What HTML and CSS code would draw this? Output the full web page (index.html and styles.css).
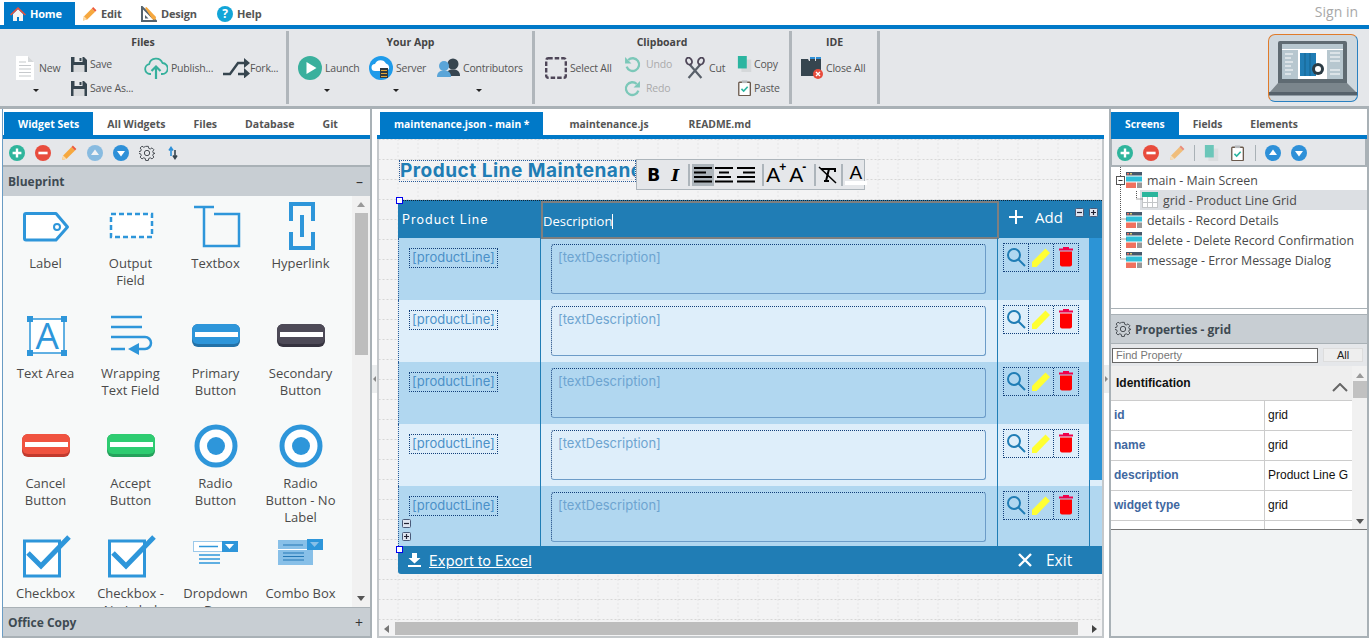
FILE: index.html
```html
<!DOCTYPE html>
<html lang="en">
<head>
<meta charset="utf-8">
<title>Product Line Maintenance</title>
<link rel="stylesheet" href="styles.css">
</head>
<body>
<svg class="sprites" width="0" height="0">
  <symbol id="pencil" viewBox="0 0 16 16"><path d="M1 15l1.2-4.6L10.5 2 14 5.5 5.6 13.8z" fill="#f6a83f"/><path d="M10.5 2l1.4-1.4 3.5 3.5L14 5.5z" fill="#ee5a3c"/><path d="M1 15l1.2-4.6 3.4 3.4z" fill="#fbd9a5"/></symbol>
  <symbol id="cplus" viewBox="0 0 16 16"><circle cx="8" cy="8" r="8" fill="#2fb59c"/><path d="M8 3.6v8.8M3.6 8h8.8" stroke="#fff" stroke-width="2.4"/></symbol>
  <symbol id="cminus" viewBox="0 0 16 16"><circle cx="8" cy="8" r="8" fill="#e84c3d"/><path d="M3.4 8h9.2" stroke="#fff" stroke-width="2.6"/></symbol>
  <symbol id="cup" viewBox="0 0 16 16"><circle cx="8" cy="8" r="8" fill="#2e90d8"/><path d="M8 4.6l4 5.4H4z" fill="#fff"/></symbol>
  <symbol id="cdown" viewBox="0 0 16 16"><circle cx="8" cy="8" r="8" fill="#2e90d8"/><path d="M8 11.4l4-5.4H4z" fill="#fff"/></symbol>
  <symbol id="gear" viewBox="0 0 24 24"><path d="M10 2h4l.6 3 2.3 1 2.6-1.700 2.800 2.800-1.700 2.600 1 2.300 3 .6v0l-.6 0-2.400.6-1 2.300 1.700 2.600-2.800 2.800-2.600-1.700-2.300 1-.6 3h-4l-.6-3-2.300-1-2.600 1.700-2.800-2.800 1.700-2.600-1-2.300-3-.6v-2.600l3-.6 1-2.300-1.700-2.600 2.800-2.800 2.600 1.700 2.300-1z" fill="none" stroke="#4a4f55" stroke-width="1.500" stroke-linejoin="round"/><circle cx="12" cy="12" r="4" fill="none" stroke="#4a4f55" stroke-width="1.500"/></symbol>
  <symbol id="floppy" viewBox="0 0 16 16"><path d="M0 1h13l3 3v12H0z" fill="#36454f"/><rect x="3.500" y="1" width="8" height="5" fill="#e6e8ea"/><rect x="8.500" y="2" width="2" height="3" fill="#36454f"/><rect x="2.500" y="9" width="11" height="7" fill="#d8dadc"/></symbol>
  <symbol id="copy" viewBox="0 0 18 18"><rect x="5" y="4" width="11" height="14" fill="#d5d8da"/><rect x="1" y="0" width="10" height="14" fill="#2bb5a0"/></symbol>
  <symbol id="paste" viewBox="0 0 16 18"><rect x="1" y="2.500" width="13" height="15" rx="1" fill="#fff" stroke="#6b5a4d" stroke-width="1.500"/><rect x="4.500" y="0.500" width="6" height="3" fill="#b7babd"/><path d="M4 10l2.500 2.500L11 7.500" fill="none" stroke="#2bb5a0" stroke-width="1.800"/></symbol>
  <symbol id="sm-minus" viewBox="0 0 9 9"><rect x=".5" y=".5" width="8" height="8" rx="1" fill="#dfe5f0" stroke="#4a5a78"/><path d="M2 4.500h5" stroke="#223" stroke-width="1.200"/></symbol>
  <symbol id="sm-plus" viewBox="0 0 9 9"><rect x=".5" y=".5" width="8" height="8" rx="1" fill="#dfe5f0" stroke="#4a5a78"/><path d="M2 4.500h5M4.500 2v5" stroke="#223" stroke-width="1.200"/></symbol>
  <symbol id="mag" viewBox="0 0 20 20"><circle cx="8" cy="8" r="6" fill="none" stroke="#207db5" stroke-width="2"/><path d="M12.500 12.500L19 19" stroke="#207db5" stroke-width="2"/></symbol>
  <symbol id="ypen" viewBox="0 0 20 20"><path d="M1 20v-5L14.500 1.500 19 6 5.500 20z" fill="#ffff33"/></symbol>
  <symbol id="trash" viewBox="0 0 16 20"><rect x="1" y="1.500" width="14" height="2" fill="#f0004a"/><rect x="5" y="0" width="6" height="2" fill="#f0004a"/><path d="M2 4.500h12v13a2 2 0 0 1-2 2H4a2 2 0 0 1-2-2z" fill="#ff0000"/></symbol>
  <symbol id="screen" viewBox="0 0 16 16"><rect x="0" y="0" width="16" height="3.500" fill="#46586a"/><rect x="0" y="4.500" width="16" height="5" fill="#30c0d8"/><rect x="0" y="10.500" width="10" height="5.500" fill="#f0725f"/><rect x="11" y="10.500" width="5" height="5.500" fill="#999"/><rect x="1" y="1" width="2" height="1.500" fill="#f0725f"/><rect x="4" y="1" width="2" height="1.500" fill="#d9c26a"/></symbol>
  <symbol id="radio" viewBox="0 0 60 48"><circle cx="30" cy="24" r="19" fill="#fff" stroke="#2e96da" stroke-width="5"/><circle cx="30" cy="24" r="9" fill="#2e96da"/></symbol>
  <symbol id="check" viewBox="0 0 60 48"><rect x="8.500" y="9" width="35" height="35" fill="#fff" stroke="#2e96da" stroke-width="3"/><path d="M12 21l13 13L53 5" fill="none" stroke="#2e96da" stroke-width="5"/></symbol>
</svg>

<header class="topbar">
  <div class="toptab active">
    <svg class="ti" viewBox="0 0 16 16"><path d="M3 8v7h4v-4h2v4h4V8L8 3z" fill="#f4f4f4"/><path d="M0 8.500L8 1l8 7.500-1.200 1L8 3.300 1.200 9.500z" fill="#e8503d"/></svg>
    <span>Home</span>
  </div>
  <div class="toptab tab-edit"><svg class="ti" viewBox="0 0 16 16"><use href="#pencil"/></svg><span>Edit</span></div>
  <div class="toptab tab-design">
    <svg class="ti" viewBox="0 0 16 16"><path d="M1 1v14h14z" fill="none" stroke="#55636e" stroke-width="2"/><path d="M4 9v3.500h3.500z" fill="#55636e"/><path d="M4 2l1.500-1L15 11l-.6 3-3-.8z" fill="#f6a83f"/></svg>
    <span>Design</span>
  </div>
  <div class="toptab tab-help"><span class="help-ic">?</span><span>Help</span></div>
  <a class="signin">Sign in</a>
</header>

<section class="ribbon">
  <div class="rgroup g-files">
    <h3>Files</h3>
    <div class="rrow">
      <div class="big g-new">
        <div class="bigtop"><svg class="i18" viewBox="0 0 18 24"><path d="M0 0h12l6 6v18H0z" fill="#fff"/><path d="M12 0l6 6h-6z" fill="#d5d8da"/><path d="M3 6h7M3 9.500h12M3 13h12M3 16.500h12M3 20h12" stroke="#c6c9cc" stroke-width="1.200"/></svg><span>New</span></div>
        <i class="caret"></i>
      </div>
      <div class="stack g-save">
        <div class="sit"><svg class="i16" viewBox="0 0 16 16"><use href="#floppy"/></svg><span>Save</span></div>
        <div class="sit"><svg class="i16" viewBox="0 0 16 16"><use href="#floppy"/></svg><span>Save As...</span></div>
      </div>
      <div class="big g-pub">
        <div class="bigtop"><svg class="i24" viewBox="0 0 24 24"><path d="M7 18H6a5 5 0 0 1-.8-9.900A7 7 0 0 1 18.500 7 5.500 5.500 0 0 1 18 18h-1" fill="none" stroke="#35b09c" stroke-width="1.800"/><path d="M12 23V11M7.500 15L12 10.500 16.500 15" fill="none" stroke="#35b09c" stroke-width="2.200"/></svg><span>Publish...</span></div>
      </div>
      <div class="big g-fork">
        <div class="bigtop"><svg class="i27" viewBox="0 0 27 20"><path d="M0 16h7L15 5h8M15 16h8" fill="none" stroke="#36454f" stroke-width="2.400"/><path d="M21 0l6 5-6 5zM21 10l6 5.500-6 5z" fill="#36454f"/></svg><span>Fork...</span></div>
      </div>
    </div>
  </div>
  <div class="rgroup g-app">
    <h3>Your App</h3>
    <div class="rrow">
      <div class="big g-launch">
        <div class="bigtop"><svg class="i24" viewBox="0 0 24 24"><circle cx="12" cy="12" r="12" fill="#3ab09d"/><path d="M8.500 6l10 6-10 6z" fill="#fff"/></svg><span>Launch</span></div>
        <i class="caret"></i>
      </div>
      <div class="big g-server">
        <div class="bigtop"><svg class="i24" viewBox="0 0 24 24"><circle cx="12" cy="12" r="12" fill="#1e9bea"/><path d="M6 15a3.500 3.500 0 0 1 0-7 6 6 0 0 1 11-.5 4 4 0 0 1 1 7.500z" fill="#fff"/><rect x="11" y="12" width="8" height="10" fill="#2f3a40"/><path d="M12 14.500h6M12 17.500h6M12 20.500h6" stroke="#e0a63a" stroke-width="1.200"/></svg><span>Server</span></div>
        <i class="caret"></i>
      </div>
      <div class="big g-contrib">
        <div class="bigtop"><svg class="i24" viewBox="0 0 24 24"><circle cx="17" cy="8" r="5.500" fill="#36454f"/><path d="M10 20c0-5 3-6.500 7-6.500s7 1.500 7 6.500z" fill="#36454f"/><circle cx="8" cy="10" r="5" fill="#5aa5d8"/><path d="M1 21c0-5 3-6.500 7-6.500s7 1.500 7 6.500z" fill="#5aa5d8"/></svg><span>Contributors</span></div>
        <i class="caret"></i>
      </div>
    </div>
  </div>
  <div class="rgroup g-clip">
    <h3>Clipboard</h3>
    <div class="rrow">
      <div class="big g-sel">
        <div class="bigtop"><svg class="i22" viewBox="0 0 22 22"><rect x="1.200" y="1.200" width="19.600" height="19.600" rx="2" fill="none" stroke="#4e4658" stroke-width="2.400" stroke-dasharray="4.500 2"/></svg><span>Select All</span></div>
      </div>
      <div class="stack g-undo">
        <div class="sit dim"><svg class="i17" viewBox="0 0 16 16"><path d="M4 3.800A6 6 0 1 1 2.500 10" fill="none" stroke="#7cc8b9" stroke-width="2.200"/><path d="M1 1v6h6z" fill="#7cc8b9"/></svg><span>Undo</span></div>
        <div class="sit dim"><svg class="i17" viewBox="0 0 16 16"><path d="M12 3.800A6 6 0 1 0 13.500 10" fill="none" stroke="#7cc8b9" stroke-width="2.200"/><path d="M15 1v6H9z" fill="#7cc8b9"/></svg><span>Redo</span></div>
      </div>
      <div class="big g-cut">
        <div class="bigtop"><svg class="i22" viewBox="0 0 22 24"><path d="M5 8l13 15M17 8L4 23" stroke="#59606a" stroke-width="2.400"/><ellipse cx="4.500" cy="4.500" rx="3" ry="4" fill="none" stroke="#4e4658" stroke-width="2" transform="rotate(-25 4.500 4.500)"/><ellipse cx="17.500" cy="4.500" rx="3" ry="4" fill="none" stroke="#4e4658" stroke-width="2" transform="rotate(25 17.500 4.500)"/></svg><span>Cut</span></div>
      </div>
      <div class="stack g-copy">
        <div class="sit"><svg class="i16" viewBox="0 0 18 18"><use href="#copy"/></svg><span>Copy</span></div>
        <div class="sit"><svg class="i16" viewBox="0 0 16 18"><use href="#paste"/></svg><span>Paste</span></div>
      </div>
    </div>
  </div>
  <div class="rgroup g-ide">
    <h3>IDE</h3>
    <div class="rrow">
      <div class="big g-close">
        <div class="bigtop"><svg class="i24" viewBox="0 0 24 24"><path d="M1 3h7l1 2h1V3h5v2h1V3h5v17H1z" fill="#36454f"/><path d="M10 2h5M16 2h5" stroke="#2e90d8" stroke-width="2"/><circle cx="18" cy="18" r="5" fill="#e84c3d"/><path d="M16 16l4 4M20 16l-4 4" stroke="#fff" stroke-width="1.400"/></svg><span>Close All</span></div>
      </div>
    </div>
  </div>
  <div class="thumb">
    <svg viewBox="1 1 88 66" width="88" height="66">
      <path d="M10 9a2 2 0 0 1 2-2h65a2 2 0 0 1 2 2v40H10z" fill="#5f6b72"/>
      <rect x="14" y="10" width="61" height="35" fill="#b7c7cf"/>
      <rect x="14" y="15" width="61" height="1" fill="#fff"/>
      <rect x="30" y="16" width="29" height="29" fill="#fff"/>
      <rect x="32" y="19" width="16" height="23" fill="#207db5"/>
      <path d="M37 19v23M42 19v23" stroke="#15648f" stroke-width="1"/>
      <circle cx="50" cy="35" r="6" fill="#2b3b44"/>
      <circle cx="50" cy="35" r="3" fill="#fff"/>
      <path d="M17 20h8M17 24h6M17 28h8M17 32h6M17 36h8M17 40h6M62 19h10M62 23h10M62 27h10M62 36h10M62 40h10" stroke="#fff" stroke-width="1"/>
      <path d="M10 49h69l10 10H1z" fill="#7b868c"/>
      <rect x="1" y="58" width="88" height="3.500" fill="#55616a"/>
    </svg>
  </div>
</section>

<main class="workspace">
  <aside class="panel left">
    <nav class="tabs">
      <span class="tab active">Widget Sets</span><span class="tab">All Widgets</span><span class="tab">Files</span><span class="tab">Database</span><span class="tab">Git</span>
    </nav>
    <div class="tools">
      <svg class="t16"><use href="#cplus"/></svg>
      <svg class="t16"><use href="#cminus"/></svg>
      <svg class="t16"><use href="#pencil"/></svg>
      <svg class="t16 faded"><use href="#cup"/></svg>
      <svg class="t16"><use href="#cdown"/></svg>
      <svg class="t16" viewBox="0 0 24 24"><use href="#gear"/></svg>
      <svg class="t16" viewBox="0 0 16 16"><path d="M6 3v8M4 5.500L6 2.500 8 5.500" fill="none" stroke="#2e90d8" stroke-width="1.600"/><path d="M10 5v8M8 10.500l2 3 2-3" fill="none" stroke="#36454f" stroke-width="1.600"/></svg>
    </div>
    <div class="acc"><b>Blueprint</b><span>–</span></div>
    <div class="widgets">
      <div class="wgrid">
        <div class="w"><svg viewBox="0 0 60 48"><path d="M10 11.500h30L51.500 25 40 38H10q-1.500 0-1.500-1.500V13q0-1.500 1.500-1.500z" fill="#fff" stroke="#2e96da" stroke-width="3" stroke-linejoin="round"/><circle cx="41" cy="25" r="3" fill="none" stroke="#2e96da" stroke-width="2"/></svg><p>Label</p></div>
        <div class="w"><svg viewBox="0 0 60 48"><rect x="10" y="12" width="41" height="23" fill="#fff" stroke="#2e96da" stroke-width="2.500" stroke-dasharray="5 3"/></svg><p>Output Field</p></div>
        <div class="w"><svg viewBox="0 0 60 48"><path d="M8 5h20M18 5v39h35V12H28" fill="none" stroke="#2e96da" stroke-width="2.500"/></svg><p>Textbox</p></div>
        <div class="w"><svg viewBox="0 0 60 48"><path d="M20 19V2h22v17M20 30v16h22V30M31 13v22" fill="none" stroke="#2e96da" stroke-width="4"/></svg><p>Hyperlink</p></div>
        <div class="w"><svg viewBox="0 0 60 48"><rect x="14" y="7" width="34" height="34" fill="#fff" stroke="#2e96da" stroke-width="1.500"/><path d="M11 4h6v6h-6zM45 4h6v6h-6zM11 38h6v6h-6zM45 38h6v6h-6z" fill="#2e96da"/><text x="31" y="37" class="bigA">A</text></svg><p>Text Area</p></div>
        <div class="w"><svg viewBox="0 0 60 48"><path d="M10 5h31M10 15h31M10 25h34a6 6 0 0 1 0 12H34M10 37h14" fill="none" stroke="#2e96da" stroke-width="2.500"/><path d="M27 37l11-6v12z" fill="#2e96da"/></svg><p>Wrapping Text Field</p></div>
        <div class="w"><svg viewBox="0 0 60 48"><rect x="6" y="12" width="48" height="23" rx="6" fill="#2372a8"/><rect x="6" y="12" width="48" height="20" rx="6" fill="#2e96da"/><rect x="9" y="20" width="43" height="5" fill="#fff"/></svg><p>Primary Button</p></div>
        <div class="w"><svg viewBox="0 0 60 48"><rect x="6" y="12" width="48" height="23" rx="6" fill="#35333f"/><rect x="6" y="12" width="48" height="20" rx="6" fill="#4d4a57"/><rect x="9" y="20" width="43" height="5" fill="#fff"/></svg><p>Secondary Button</p></div>
        <div class="w"><svg viewBox="0 0 60 48"><rect x="6" y="12" width="48" height="23" rx="6" fill="#c23a2e"/><rect x="6" y="12" width="48" height="20" rx="6" fill="#f05340"/><rect x="9" y="20" width="43" height="5" fill="#fff"/></svg><p>Cancel Button</p></div>
        <div class="w"><svg viewBox="0 0 60 48"><rect x="6" y="12" width="48" height="23" rx="6" fill="#25a25c"/><rect x="6" y="12" width="48" height="20" rx="6" fill="#2ecc71"/><rect x="9" y="20" width="43" height="5" fill="#fff"/></svg><p>Accept Button</p></div>
        <div class="w"><svg viewBox="0 0 60 48"><use href="#radio"/></svg><p>Radio Button</p></div>
        <div class="w"><svg viewBox="0 0 60 48"><use href="#radio"/></svg><p>Radio Button - No Label</p></div>
        <div class="w"><svg viewBox="0 0 60 48"><use href="#check"/></svg><p>Checkbox</p></div>
        <div class="w"><svg viewBox="0 0 60 48"><use href="#check"/></svg><p>Checkbox - No Label</p></div>
        <div class="w"><svg viewBox="0 0 60 48"><rect x="7.500" y="9.500" width="36" height="10" fill="#fff" stroke="#9cc9ea"/><path d="M13 14.500h19M13 23h21M13 27h21M13 31h21" stroke="#2e96da" stroke-width="1.400"/><rect x="36" y="9" width="16" height="11" fill="#2e96da"/><path d="M39 12h9l-4.500 5z" fill="#fff"/></svg><p>Dropdown Box</p></div>
        <div class="w"><svg viewBox="0 0 60 48"><rect x="7" y="8" width="35" height="25" fill="#88c0e8"/><path d="M12 13h20M12 21h21M12 24.500h21M12 28h21" stroke="#2478b5" stroke-width="1.200"/><rect x="7" y="17" width="35" height="1" fill="#fff"/><rect x="36" y="7" width="16" height="11" fill="#2e96da"/><path d="M39 10h9l-4.500 5z" fill="#88c0e8"/></svg><p>Combo Box</p></div>
      </div>
      <div class="vscroll">
        <i class="arr up"></i><i class="vthumb"></i><i class="arr down"></i>
      </div>
    </div>
    <div class="acc bottom"><b>Office Copy</b><span>+</span></div>
  </aside>

  <div class="split"><i class="grip l"></i></div>

  <section class="panel center">
    <nav class="tabs">
      <span class="tab active">maintenance.json - main *</span><span class="tab wide first-wide">maintenance.js</span><span class="tab wide">README.md</span>
    </nav>
    <div class="canvas-wrap">
      <div class="canvas">
        <svg class="dots" width="100%" height="100%"><defs><pattern id="dotgrid" x="-0.500" y="0" width="20" height="20" patternUnits="userSpaceOnUse"><path d="M20 0V20M0 .5H20" stroke="#d6d6d6" stroke-width="1" stroke-dasharray="2 2"/></pattern></defs><rect width="100%" height="100%" fill="url(#dotgrid)"/></svg>
        <div class="title"><span>Product Line Maintenance</span></div>
        <div class="fmt">
          <span class="fb bold">B</span>
          <span class="fb ital">I</span>
          <i class="fsep"></i>
          <span class="fb sel"><svg class="al" viewBox="0 0 18 18"><path d="M0 2h18M0 6.500h12M0 11h18M0 15.500h18" stroke="#000" stroke-width="2"/></svg></span>
          <span class="fb"><svg class="al" viewBox="0 0 18 18"><path d="M0 2h18M4 6.500h10M2 11h14M0 15.500h18" stroke="#000" stroke-width="2"/></svg></span>
          <span class="fb"><svg class="al" viewBox="0 0 18 18"><path d="M0 2h18M6 6.500h12M0 11h18M0 15.500h18" stroke="#000" stroke-width="2"/></svg></span>
          <i class="fsep far"></i>
          <span class="fb fa">A<sup>+</sup></span>
          <span class="fb fa">A<sup>-</sup></span>
          <i class="fsep far"></i>
          <span class="fb"><svg class="al wide" viewBox="0 0 20 18"><path d="M3 3h14v3M11 3L8 15M6 15h5" fill="none" stroke="#000" stroke-width="2"/><path d="M1 1l17 16" stroke="#000" stroke-width="1.500"/></svg></span>
          <i class="fsep"></i>
          <span class="fb fc">A</span>
        </div>
        <i class="handle h1"></i>
        <div class="gridw">
          <div class="ghead">
            <div class="gh1">Product Line</div>
            <div class="gh2">Description<i class="cursor"></i></div>
            <div class="gh3">
              <svg class="g16" viewBox="0 0 16 16"><path d="M8 1v14M1 8h14" stroke="#fff" stroke-width="2"/></svg>
              <span class="add">Add</span>
              <svg class="g9 first"><use href="#sm-minus"/></svg>
              <svg class="g9 second"><use href="#sm-plus"/></svg>
            </div>
          </div>
          <div class="grow odd">
            <div class="c1"><span class="pl">[productLine]</span></div>
            <div class="c2"><div class="td">[textDescription]</div></div>
            <div class="c3"><div class="acts"><span><svg class="a1"><use href="#mag"/></svg></span><span><svg class="a1"><use href="#ypen"/></svg></span><span><svg class="a1"><use href="#trash"/></svg></span></div></div>
          </div>
          <div class="grow even">
            <div class="c1"><span class="pl">[productLine]</span></div>
            <div class="c2"><div class="td">[textDescription]</div></div>
            <div class="c3"><div class="acts"><span><svg class="a1"><use href="#mag"/></svg></span><span><svg class="a1"><use href="#ypen"/></svg></span><span><svg class="a1"><use href="#trash"/></svg></span></div></div>
          </div>
          <div class="grow odd">
            <div class="c1"><span class="pl">[productLine]</span></div>
            <div class="c2"><div class="td">[textDescription]</div></div>
            <div class="c3"><div class="acts"><span><svg class="a1"><use href="#mag"/></svg></span><span><svg class="a1"><use href="#ypen"/></svg></span><span><svg class="a1"><use href="#trash"/></svg></span></div></div>
          </div>
          <div class="grow even">
            <div class="c1"><span class="pl">[productLine]</span></div>
            <div class="c2"><div class="td">[textDescription]</div></div>
            <div class="c3"><div class="acts"><span><svg class="a1"><use href="#mag"/></svg></span><span><svg class="a1"><use href="#ypen"/></svg></span><span><svg class="a1"><use href="#trash"/></svg></span></div></div>
          </div>
          <div class="grow odd last">
            <div class="c1"><span class="pl">[productLine]</span></div>
            <div class="c2"><div class="td">[textDescription]</div></div>
            <div class="c3"><div class="acts"><span><svg class="a1"><use href="#mag"/></svg></span><span><svg class="a1"><use href="#ypen"/></svg></span><span><svg class="a1"><use href="#trash"/></svg></span></div></div>
          </div>
          <i class="gthumb"></i>
          <svg class="g9 gm"><use href="#sm-minus"/></svg>
          <svg class="g9 gp"><use href="#sm-plus"/></svg>
          <div class="gfoot">
            <svg class="g13" viewBox="0 0 13 14"><path d="M4 0h5v5h3.500L6.500 10.500.5 5H4z" fill="#fff"/><rect x="0" y="12" width="13" height="2" fill="#fff"/></svg>
            <a class="exp">Export to Excel</a>
            <svg class="g16 xi" viewBox="0 0 16 16"><path d="M2 2l12 12M14 2L2 14" stroke="#fff" stroke-width="2.400"/></svg>
            <span class="exit">Exit</span>
          </div>
        </div>
        <i class="handle h2"></i>
      </div>
      <div class="hscroll"><i class="arr left"></i><i class="hthumb"></i><i class="arr right"></i></div>
    </div>
  </section>

  <div class="split"><i class="grip r"></i></div>

  <aside class="panel right">
    <nav class="tabs">
      <span class="tab active">Screens</span><span class="tab">Fields</span><span class="tab">Elements</span>
    </nav>
    <div class="tools rtools">
      <svg class="t16"><use href="#cplus"/></svg>
      <svg class="t16"><use href="#cminus"/></svg>
      <svg class="t16 faded2"><use href="#pencil"/></svg>
      <i class="tsep"></i>
      <svg class="t16 faded2" viewBox="0 0 18 18"><use href="#copy"/></svg>
      <svg class="t16" viewBox="0 0 16 18"><use href="#paste"/></svg>
      <i class="tsep"></i>
      <svg class="t16"><use href="#cup"/></svg>
      <svg class="t16"><use href="#cdown"/></svg>
    </div>
    <div class="tree">
      <svg class="treelines" width="60" height="110"><path d="M9.500 0V92M9.500 52H16M9.500 72H16M9.500 92H16M25.500 24V32H32" fill="none" stroke="#555" stroke-dasharray="1 1"/><rect x="5.500" y="9.500" width="8" height="8" fill="#fff" stroke="#555"/><path d="M7.500 13.500h4" stroke="#333"/></svg>
      <div class="node n0"><svg class="s16"><use href="#screen"/></svg><span>main - Main Screen</span></div>
      <div class="node n1 selected"><svg class="s16" viewBox="0 0 16 16"><rect x=".5" y=".5" width="15" height="15" fill="#fff" stroke="#c3c6c8"/><rect width="16" height="5" fill="#2bb59c"/><path d="M5.500 5v11M10.500 5v11M0 10.500h16" stroke="#c3c6c8"/></svg><span>grid - Product Line Grid</span></div>
      <div class="node n0"><svg class="s16"><use href="#screen"/></svg><span>details - Record Details</span></div>
      <div class="node n0"><svg class="s16"><use href="#screen"/></svg><span>delete - Delete Record Confirmation</span></div>
      <div class="node n0"><svg class="s16"><use href="#screen"/></svg><span>message - Error Message Dialog</span></div>
    </div>
    <div class="props">
      <div class="phead"><svg class="s16" viewBox="0 0 24 24"><use href="#gear"/></svg><b>Properties - grid</b></div>
      <div class="psearch"><span class="pinput">Find Property</span><span class="pall">All</span></div>
      <div class="pbody">
        <div class="ptable">
          <div class="pcat"><b>Identification</b><svg class="chev" viewBox="0 0 16 9"><path d="M1 8l7-7 7 7" fill="none" stroke="#666" stroke-width="2"/></svg></div>
          <div class="prow"><span>id</span><em>grid</em></div>
          <div class="prow"><span>name</span><em>grid</em></div>
          <div class="prow"><span>description</span><em>Product Line Grid</em></div>
          <div class="prow"><span>widget type</span><em>grid</em></div>
          <div class="prow stub"><span></span><em></em></div>
        </div>
        <div class="pscroll"><i class="arr up"></i><i class="pthumb"></i><i class="arr down"></i></div>
      </div>
    </div>
  </aside>
</main>
</body>
</html>
```

FILE: styles.css
```css
* { box-sizing: border-box; }
html, body { margin: 0; padding: 0; }
body {
  width: 1369px; height: 641px; overflow: hidden; background: #fff;
  font-family: "Open Sans", "Noto Sans", sans-serif; color: #444;
  font-size: 10.5px; letter-spacing: -.2px;
}
.sprites { position: absolute; }

/* top bar */
.topbar { height: 29px; display: flex; align-items: flex-end; border-bottom: 4px solid #0079c8; padding-left: 4px; position: relative; }
.toptab { display: flex; align-items: center; height: 23px; font-weight: 700; font-size: 11px; color: #555; }
.toptab.active { width: 71px; background: #0079c8; color: #fff; padding-left: 6px; }
.tab-edit { margin-left: 7px; width: 59px; }
.tab-design { width: 76px; }
.tab-help { width: 60px; }
.ti { width: 16px; height: 16px; margin-right: 4px; flex: none; }
.tab-edit .ti { width: 15px; margin-right: 4px; }
.help-ic { width: 16px; height: 16px; border-radius: 50%; background: #12a5d8; color: #fff; font-size: 12px; line-height: 16px; text-align: center; margin-right: 4px; }
.signin { margin-left: auto; margin-right: 11px; align-self: center; font-size: 14px; letter-spacing: 0; color: #a8a8a8; position: relative; top: -1px; }

/* ribbon */
.ribbon { height: 80px; background: #e5e7ea; border-bottom: 3px solid #a9b1b6; display: flex; padding: 2px 0; position: relative; }
.rgroup { height: 73px; border-right: 3px solid #b0b6bb; }
.rgroup h3 { margin: 0; padding-top: 4px; height: 21px; font-size: 10.5px; letter-spacing: 0; line-height: 14px; text-align: center; font-weight: 700; color: #444; }
.rrow { display: flex; }
.g-files { width: 289px; } .g-files .rrow { padding-left: 16px; }
.g-app { width: 246px; } .g-app .rrow { padding-left: 9px; }
.g-clip { width: 257px; } .g-clip .rrow { padding-left: 10px; }
.g-ide { width: 88px; } .g-ide .rrow { padding-left: 8px; }
.big { display: flex; flex-direction: column; }
.bigtop { display: flex; align-items: center; height: 32px; white-space: nowrap; color: #555; }
.bigtop svg { flex: none; margin-right: 3px; }
.caret { display: block; width: 0; height: 0; border: 3px solid transparent; border-top: 3px solid #222; border-bottom: 0; margin-top: 5px; }
.stack { display: flex; flex-direction: column; }
.sit { display: flex; align-items: center; height: 24px; white-space: nowrap; color: #555; }
.sit svg { flex: none; margin-right: 3px; }
.sit.dim { color: #aaa; }
.sit.dim svg { margin: 0 5px 0 -1px; }
.g-copy .sit svg { margin-right: 1px; }
.i16 { width: 16px; height: 16px; }
.i17 { width: 17px; height: 17px; }
.i18 { width: 18px; height: 24px; }
.i22 { width: 22px; height: 22px; }
.i24 { width: 24px; height: 24px; }
.i27 { width: 27px; height: 20px; }
.g-new { width: 55px; } .g-new .bigtop svg { margin-right: 5px; } .g-new .caret { margin-left: 17px; }
.g-save { width: 73px; }
.g-pub { width: 79px; }
.g-fork .bigtop svg { margin-right: 0; }
.g-launch { width: 71px; } .g-launch .caret { margin-left: 26px; }
.g-server { width: 67px; } .g-server .caret { margin-left: 24px; }
.g-contrib .caret { margin-left: 40px; }
.g-sel { width: 80px; }
.g-undo { width: 59px; }
.g-cut { width: 53px; }
.g-close .bigtop svg { margin-right: 2px; }
.thumb { position: absolute; left: 1268px; top: 5px; width: 90px; height: 68px; border-radius: 7px; background: #cfd8de; border: 1px solid #e07b2a; border-right-color: #2a80c0; border-bottom-color: #2a80c0; }
.thumb svg { display: block; }

/* workspace */
.workspace { display: flex; height: 532px; padding-left: 2px; }
.panel { height: 529px; display: flex; flex-direction: column; background: #fff; }
.left { width: 370px; border-bottom: 2px solid #a9b1b6; border-right: 2px solid #a9b1b6; border-left: 1px solid #6a9cc4; }
.center { width: 727px; }
.right { width: 260px; border-right: 2px solid #a9b1b6; border-left: 2px solid #a9b1b6; border-bottom: 2px solid #a9b1b6; }
.split { width: 5px; position: relative; background: #fff; }
.grip { position: absolute; top: 256px; left: 0; width: 5px; height: 28px; background: #eceeef; }
.grip::after { content: ""; position: absolute; left: 1px; top: 11px; border: 3px solid transparent; border-left: 0; border-right: 3px solid #888; }
.grip.r::after { border-right: 0; border-left: 3px solid #888; }
.tabs { height: 30px; padding: 3px 0 0 1px; display: flex; border-bottom: 4px solid #0079c8; flex: none; font-weight: 700; font-size: 10.5px; letter-spacing: 0; color: #555; }
.tab { padding: 1px 14px 0; line-height: 22px; white-space: nowrap; }
.tab.active { background: #0079c8; color: #fff; }
.center .tabs { padding-left: 3px; font-size: 10.3px; }
.right .tabs { padding-left: 0; font-size: 10.3px; }
.tab.wide { padding: 1px 20px 0; }
.first-wide { margin-left: 6px; }
.tools { height: 28px; flex: none; background: #e5e7ea; border-bottom: 2px solid #a9b1b6; display: flex; align-items: center; gap: 10px; padding: 2px 0 0 6px; }
.t16 { width: 16px; height: 16px; flex: none; }
.faded { opacity: .5; }
.faded2 { opacity: .65; }
.acc { height: 29px; flex: none; background: #c8ced3; display: flex; align-items: center; justify-content: space-between; padding: 0 7px 0 5px; font-size: 12px; letter-spacing: 0; color: #3e4a52; }
.acc span { font-size: 14px; color: #333; }
.acc.bottom { border-top: 1px solid #a9b1b6; }
.widgets { flex: 1; min-height: 0; display: flex; background: #f7f9f9; overflow: hidden; }
.wgrid { width: 351px; display: grid; grid-template-columns: repeat(4, 85px); grid-auto-rows: 110px; height: 411px; overflow: hidden; align-content: start; }
.w { padding-top: 6px; height: 110px; overflow: hidden; }
.w svg { width: 60px; height: 48px; display: block; margin: 0 auto; overflow: visible; }
.w p { margin: 5px auto 0; width: 74px; text-align: center; font-size: 13px; letter-spacing: 0; line-height: 17px; color: #4a4a4a; }
.bigA { font-family: "Open Sans", sans-serif; font-size: 37px; fill: #2e96da; text-anchor: middle; }
.vscroll { width: 18px; background: #f1f1f1; display: flex; flex-direction: column; align-items: center; padding: 6px 2px; position: relative; }
.vthumb { display: block; width: 13px; height: 142px; background: #bdbdbd; margin-top: 6px; }
.arr { display: block; width: 0; height: 0; border: 4px solid transparent; }
.arr.up { border-bottom: 5px solid #999; border-top: 0; }
.arr.down { border-top: 5px solid #555; border-bottom: 0; margin-top: auto; }
.arr.left { border-right: 5px solid #777; border-left: 0; }
.arr.right { border-left: 5px solid #444; border-right: 0; }

/* canvas */
.canvas-wrap { flex: 1; min-height: 0; border: 2px solid #c4c8cb; border-top: 0; display: flex; flex-direction: column; background: #f3f3f4; }
.canvas { height: 483px; position: relative; overflow: hidden; background: #f3f3f4; }
.dots { position: absolute; inset: 0; }
.title { position: absolute; left: 20px; top: 21px; width: 237px; height: 22px; border: 1px dotted #2a5b98; overflow: hidden; white-space: nowrap; font-family: Inter, "Open Sans", sans-serif; font-weight: 700; font-size: 19px; letter-spacing: .5px; line-height: 19px; color: #207db5; }
.fmt { position: absolute; left: 257px; top: 20px; width: 229px; height: 31px; background: #e5e7ea; border: 1px solid #adb5bb; display: flex; align-items: center; padding-left: 6px; z-index: 3; color: #000; letter-spacing: 0; }
.fb { display: flex; align-items: center; justify-content: center; width: 21.5px; height: 22px; flex: none; }
.fb.sel { background: #adb5bb; }
.fb.bold { font-weight: 700; font-size: 17px; font-family: "DejaVu Sans", sans-serif; }
.fb.ital { font-weight: 700; font-style: italic; font-size: 17px; font-family: "DejaVu Serif", serif; }
.fa { font-size: 21px; font-family: "Liberation Sans", sans-serif; }
.fa sup { font-size: 12px; font-weight: 700; line-height: 0; position: relative; top: -8px; margin-left: -1px; }
.fc { font-size: 19px; border-bottom: 4px solid #fff; height: 21px; line-height: 17px; font-family: "Liberation Sans", sans-serif; }
.al { width: 18px; height: 18px; }
.al.wide { width: 20px; }
.fsep { width: 2px; height: 22px; background: #adb5bb; margin: 0 2px; flex: none; }
.fsep.far { margin-left: 5px; }
.handle { position: absolute; width: 7px; height: 7px; background: #fff; border: 1.5px solid #0000ee; z-index: 4; }
.h1 { left: 17px; top: 58px; }
.h2 { left: 17px; top: 407px; }
.gridw { position: absolute; left: 19px; top: 61px; width: 704px; letter-spacing: 0; }
.ghead { display: flex; height: 38px; background: #207db5; color: #fff; border-top: 1px dotted #123; }
.gh1 { width: 143px; font-family: Inter, sans-serif; font-size: 12.5px; letter-spacing: 1px; line-height: 37px; padding-left: 4px; }
.gh2 { width: 458px; border: 2px solid #7f7f7f; height: 38px; font-size: 13px; line-height: 36px; font-family: "Open Sans", sans-serif; white-space: nowrap; }
.cursor { display: inline-block; width: 1px; height: 15px; background: #fff; vertical-align: -3px; }
.gh3 { flex: 1; display: flex; align-items: center; padding: 0 0 6px 9px; }
.g16 { width: 16px; height: 16px; flex: none; }
.add { font-size: 15px; margin-left: 11px; width: 30px; }
.g9 { width: 9px; height: 9px; flex: none; display: block; }
.first { margin: -8px 5px 0 10px; }
.second { margin-top: -8px; }
.grow { display: flex; height: 62px; border-left: 1px dotted #2a5b98; }
.grow.last { height: 60px; }
.grow.odd { background: #b1d7f0; }
.grow.even { background: #deeefa; }
.c1 { width: 142px; border-right: 1px solid #207db5; padding: 10px 0 0 10px; flex: none; }
.pl { display: inline-block; height: 20px; padding: 0 2px; border: 1px dotted #123f7a; font-family: Inter, sans-serif; font-size: 13px; line-height: 17px; color: #4b90c8; white-space: nowrap; }
.c2 { width: 457px; border-right: 1px solid #207db5; padding: 6px 0 0 10px; flex: none; }
.td { width: 435px; height: 50px; border: 1px dotted #123f7a; border-right: 1px solid #6c9cc8; border-bottom: 1px solid #6c9cc8; border-radius: 3px; padding: 3px 0 0 6px; font-family: Inter, sans-serif; font-size: 13px; line-height: 18px; color: #6da4d0; white-space: nowrap; }
.c3 { flex: none; width: 92px; padding: 5px 0 0 5px; border-right: 1px solid #207db5; }
.acts { display: flex; width: 76px; height: 29px; border: 1px dotted #123f7a; }
.acts span { flex: 1; border-right: 1px dotted #123f7a; display: flex; justify-content: center; padding-top: 3px; }
.acts span:last-child { border-right: 0; }
.a1 { width: 20px; height: 20px; }
.gthumb { position: absolute; left: 691px; top: 38px; width: 13px; height: 242px; background: #2c94d6; }
.gm { position: absolute; left: 4px; top: 319px; }
.gp { position: absolute; left: 4px; top: 332px; }
.gfoot { height: 28px; background: #207db5; display: flex; align-items: center; color: #fff; padding-left: 10px; border-radius: 0 0 0 3px; }
.g13 { width: 13px; height: 14px; flex: none; }
.exp { font-family: Inter, sans-serif; font-size: 14.5px; text-decoration: underline; margin-left: 8px; width: 589px; white-space: nowrap; }
.xi { margin-left: -1px; }
.exit { font-size: 15.5px; margin-left: 13px; }
.hscroll { height: 13px; display: flex; align-items: center; padding: 0 5px; background: #f3f3f4; flex: none; }
.hthumb { display: block; flex: 1; height: 13px; margin: 0 14px 0 6px; background: #bdbdbd; }

/* right */
.rtools { border: 2px solid #a9b1b6; border-top: 0; padding-left: 5px; gap: 10px; margin-left: -1px; }
.tsep { width: 1px; height: 16px; background: #a9b1b6; margin: 0 -1px; flex: none; }
.tree { height: 142px; flex: none; padding-top: 3px; position: relative; border-bottom: 1px solid #a9b1b6; }
.treelines { position: absolute; left: 0; top: 0; z-index: 1; }
.node { height: 20px; display: flex; align-items: center; font-size: 12.4px; letter-spacing: 0; color: #4a4a4a; white-space: nowrap; }
.node.n0 { padding-left: 15px; }
.node span { margin-left: 5px; }
.selected { background: #dcdfe3; margin-left: 29px; padding-left: 2px; }
.s16 { width: 16px; height: 16px; flex: none; }
.props { flex: 1; min-height: 0; margin-top: 5px; border-top: 1px solid #a9b1b6; background: #f1f3f4; letter-spacing: 0; }
.phead { height: 29px; background: #c8ced3; display: flex; align-items: center; padding-left: 4px; font-size: 12px; color: #3e4a52; border-bottom: 1px solid #a9b1b6; }
.phead b { margin-left: 4px; }
.psearch { height: 22px; background: #e5e7ea; display: flex; align-items: center; padding-left: 1px; font-family: "Liberation Sans", sans-serif; }
.pinput { width: 206px; height: 15px; border: 1px solid #666; background: #fff; font-size: 11px; line-height: 13px; padding-left: 3px; color: #777; }
.pall { width: 40px; height: 14px; margin-left: 5px; background: #eee; border: 1px solid #ddd; text-align: center; line-height: 12px; color: #222; font-size: 11px; }
.pbody { display: flex; height: 164px; border-bottom: 1px solid #777; background: #eee; }
.ptable { width: 241px; font-family: "Liberation Sans", sans-serif; font-size: 12px; overflow: hidden; }
.pcat { height: 35px; background: #eee; display: flex; align-items: center; justify-content: space-between; padding: 0 4px 0 5px; color: #111; border-bottom: 1px solid #ccc; }
.chev { width: 16px; height: 9px; margin-top: 8px; }
.prow { height: 30px; display: flex; background: #fff; border-bottom: 1px solid #ccc; line-height: 29px; }
.prow span { width: 154px; height: 100%; padding-left: 3px; font-weight: 700; color: #3f68a0; border-right: 1px solid #ccc; flex: none; }
.prow em { font-style: normal; padding-left: 3px; color: #111; white-space: nowrap; overflow: hidden; width: 83px; }
.pscroll { flex: 1; display: flex; flex-direction: column; align-items: center; padding: 7px 0 5px; background: #f1f1f1; }
.pthumb { display: block; width: 14px; height: 17px; background: #c1c1c1; margin-top: 3px; }
```
